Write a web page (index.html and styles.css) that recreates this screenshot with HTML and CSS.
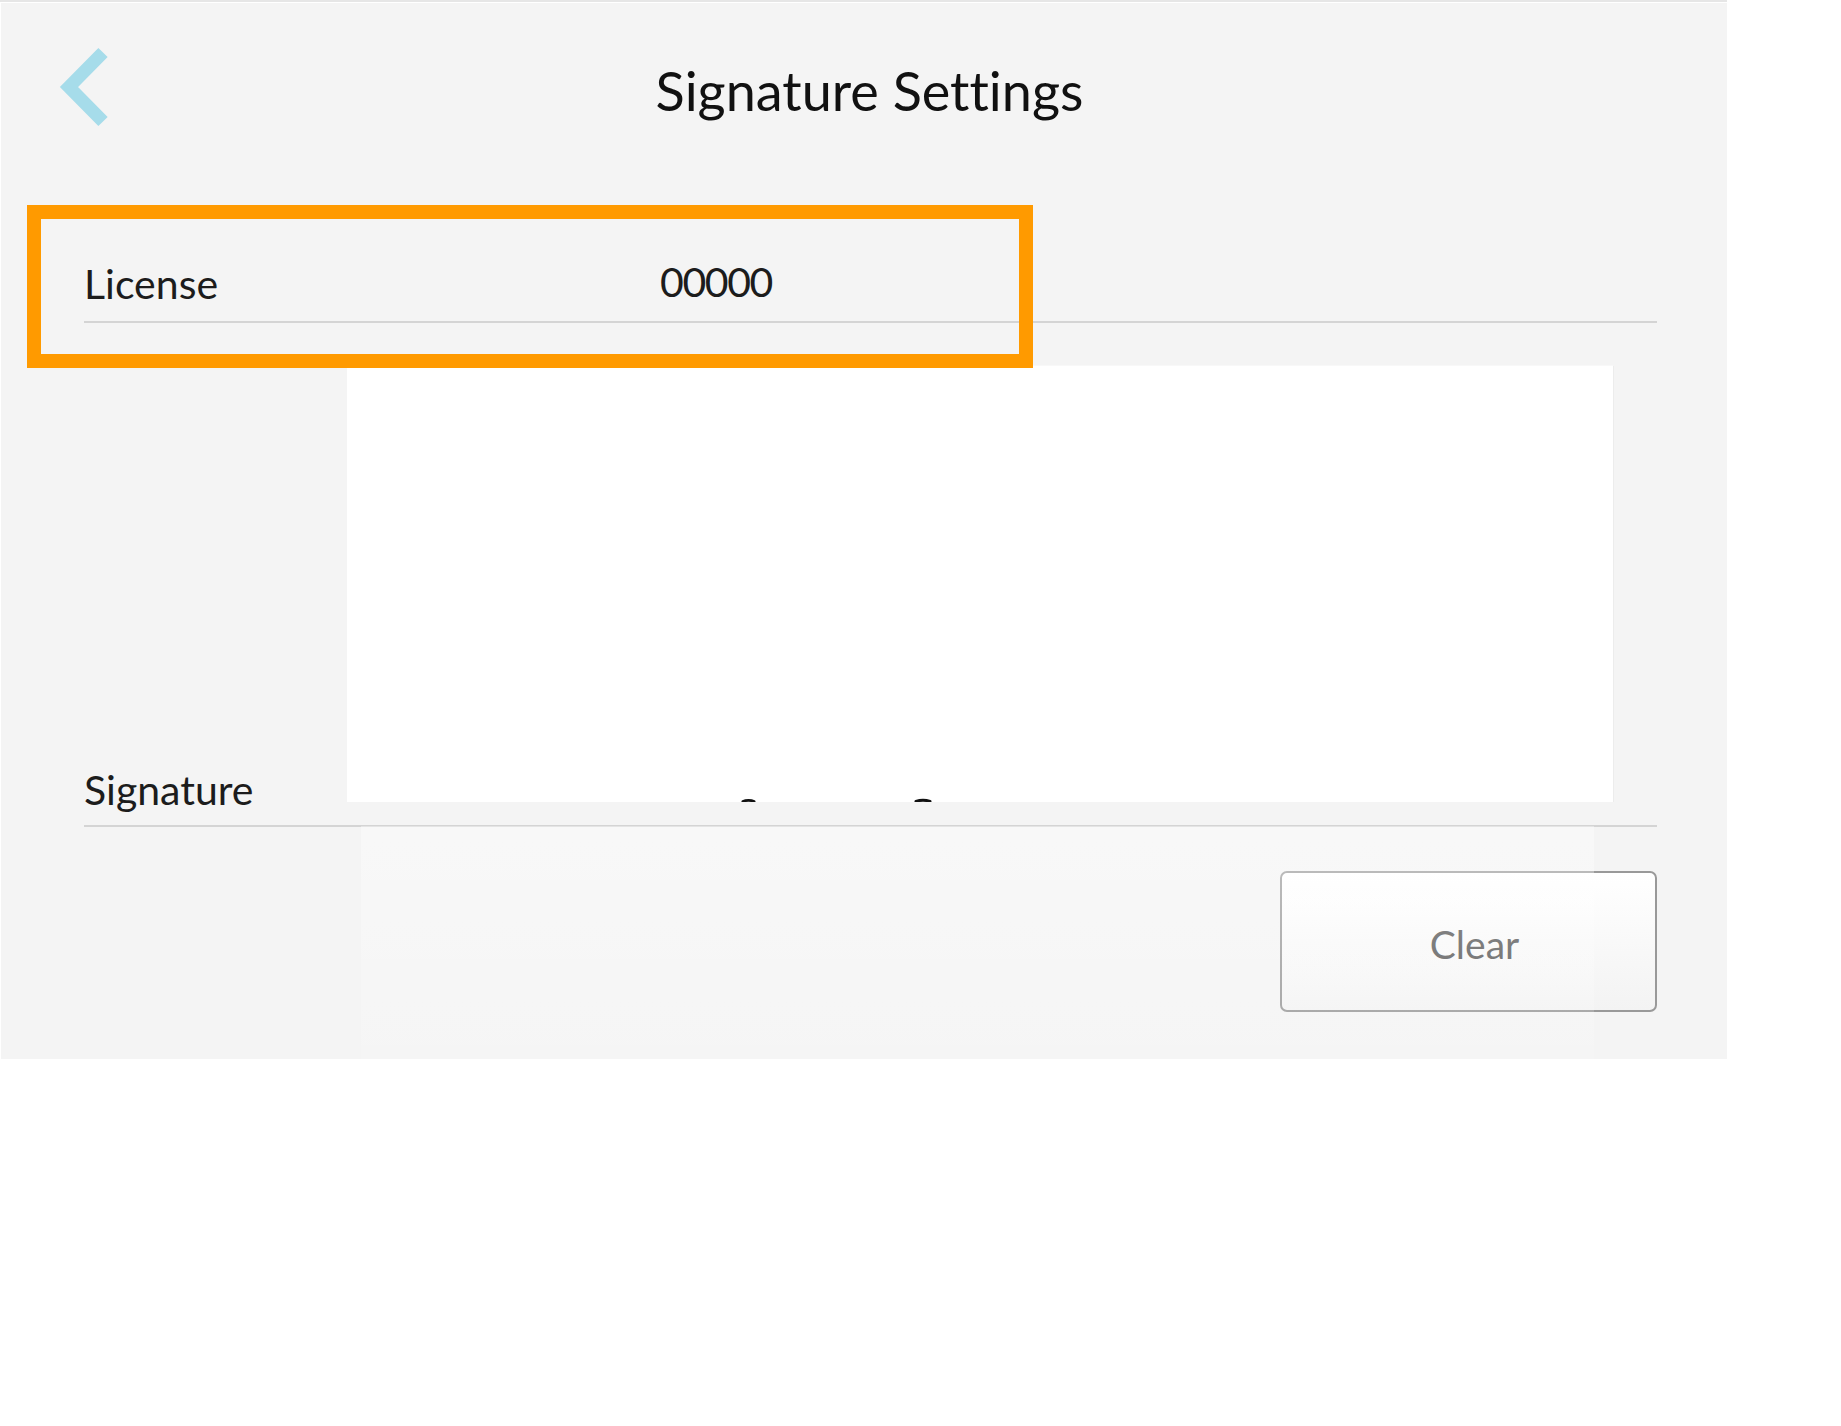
FILE: index.html
```html
<!DOCTYPE html>
<html lang="en">
<head>
<meta charset="utf-8">
<title>Signature Settings</title>
<link rel="stylesheet" href="styles.css">
</head>
<body>
<div class="page-edge"></div>
<div class="panel">
  <header class="header">
    <button class="back" aria-label="Back">
      <svg class="back-icon" width="48" height="80" viewBox="0 0 48 80">
        <polyline points="43,4.5 9,39 43,73.5" fill="none" stroke="#a6dcea" stroke-width="13" stroke-linejoin="miter" stroke-linecap="butt"/>
      </svg>
    </button>
    <h1 class="title">Signature Settings</h1>
  </header>

  <div class="content">
    <div class="row row-license">
      <div class="label">License</div>
      <div class="value">00000</div>
    </div>

    <div class="row row-signature">
      <div class="label label-sig">Signature</div>
      <div class="pad">
        <svg class="pad-marks" width="1266" height="436" viewBox="0 0 1266 436">
          <path d="M396 435.5 C399 434 404 434 407 435.5" fill="none" stroke="#111" stroke-width="3" stroke-linecap="round"/>
          <path d="M569 435.5 C573 434 579 434 583 435.5" fill="none" stroke="#111" stroke-width="3" stroke-linecap="round"/>
        </svg>
      </div>
    </div>

    <div class="actions">
      <button class="btn-clear">Clear</button>
    </div>
  </div>

  <div class="highlight"></div>
  <div class="veil"></div>
</div>
</body>
</html>
```

FILE: styles.css
```css
html, body {
  margin: 0;
  padding: 0;
  background: #ffffff;
}

body {
  width: 1841px;
  height: 1426px;
  font-family: "Lato", "Noto Sans", sans-serif;
  font-variant-ligatures: none;
  color: #1a1a1a;
}

.page-edge {
  width: 1727px;
  height: 2px;
  background: #e6e6e6;
}

.panel {
  position: relative;
  margin-top: 1px;
  margin-left: 1px;
  width: 1726px;
  height: 1056px;
  background: #f4f4f4;
  box-sizing: border-box;
}

.header {
  display: flex;
  align-items: center;
  height: 170px;
  padding-left: 59px;
  padding-right: 96px;
  box-sizing: border-box;
}

.back {
  display: flex;
  width: 48px;
  height: 80px;
  padding: 0;
  margin: 0;
  border: 0;
  background: transparent;
}

.back-icon {
  display: block;
  overflow: visible;
}

.title {
  flex: 1;
  margin: 0;
  padding-top: 6px;
  text-align: center;
  font-family: "Lato", "Noto Sans", sans-serif;
  font-variant-ligatures: none;
  font-weight: 400;
  font-size: 54px;
  line-height: 66px;
  color: #111111;
}

.content {
  padding-left: 83px;
  padding-right: 70px;
}

.row {
  display: flex;
  border-bottom: 2px solid #d4d4d4;
}

.label {
  font-size: 41px;
  line-height: 49px;
  color: #1c1c1c;
}

.row-license {
  padding-top: 86px;
  padding-bottom: 13px;
}

.row-license .label {
  width: 576px;
}

.row-license .value {
  font-size: 41px;
  line-height: 49px;
  letter-spacing: -1.4px;
  color: #1c1c1c;
  position: relative;
  top: -2px;
}

.row-signature {
  align-items: flex-end;
  padding-top: 43px;
  padding-bottom: 11px;
}

.label-sig {
  width: 263px;
}

.pad {
  width: 1266px;
  height: 436px;
  margin-bottom: 12px;
  background: #ffffff;
  box-shadow: 1px 0 0 #ececec, 0 -1px 0 #f8f8f8;
  overflow: hidden;
}

.pad-marks {
  display: block;
}

.actions {
  display: flex;
  justify-content: flex-end;
  padding-top: 44px;
}

.btn-clear {
  width: 377px;
  height: 141px;
  border: 2px solid #999999;
  border-radius: 7px;
  background: linear-gradient(#ffffff, #f3f3f3);
  font-family: "Lato", "Noto Sans", sans-serif;
  font-size: 39px;
  color: #535353;
  padding: 4px 0 0 12px;
}

.highlight {
  position: absolute;
  left: 26px;
  top: 202px;
  width: 1006px;
  height: 163px;
  border: 14px solid #ff9a00;
  box-sizing: border-box;
  pointer-events: none;
}

.veil {
  position: absolute;
  left: 360px;
  top: 823px;
  width: 1233px;
  height: 233px;
  background: linear-gradient(rgba(255, 255, 255, 0.38), rgba(255, 255, 255, 0.22) 60%, rgba(255, 255, 255, 0.12));
  pointer-events: none;
}
```
